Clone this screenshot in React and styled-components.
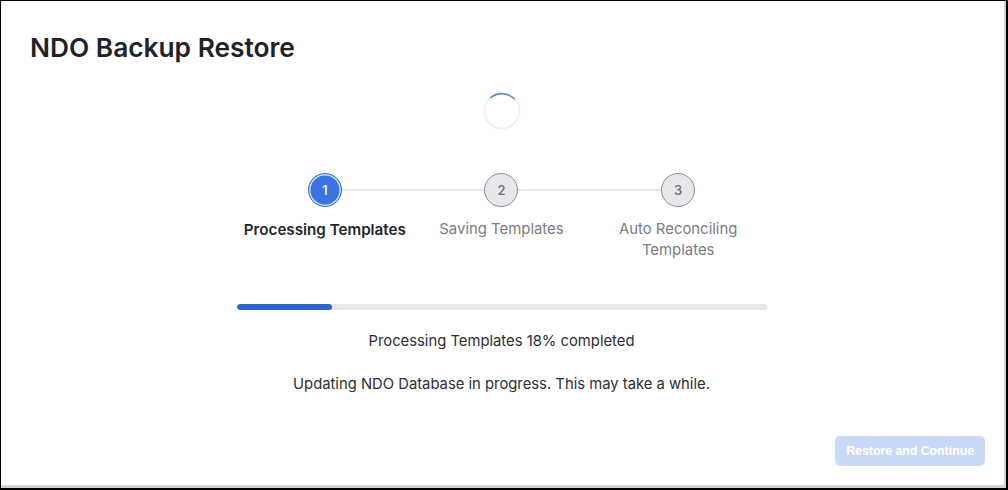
import React from "react";
import styled, { createGlobalStyle } from "styled-components";

const Global = createGlobalStyle`
  html, body { margin: 0; padding: 0; background: #ffffff; }
  body { font-family: Inter, "Noto Sans", "Liberation Sans", sans-serif; }
  * { box-sizing: border-box; }
`;

const Frame = styled.div`
  width: 1008px;
  height: 490px;
  border: 1px solid #000;
  border-right-width: 2px;
  border-bottom-width: 2px;
  background: #fff;
  box-shadow: inset -2px -3px 0 #d4d4d4;
  display: flex;
  flex-direction: column;
  position: relative;
`;

const Title = styled.h1`
  margin: 0;
  padding: 31px 0 0 29px;
  font-size: 26.3px;
  font-weight: 600;
  color: #1f2329;
  line-height: 32px;
  letter-spacing: 0;
`;

const Body = styled.div`
  display: flex;
  flex-direction: column;
  align-items: center;
  padding-top: 28px;
  padding-right: 4px;
`;

const SpinnerWrap = styled.div`
  width: 38px;
  height: 38px;
`;

const Steps = styled.div`
  margin-top: 43px;
  width: 530px;
  display: grid;
  grid-template-columns: repeat(3, 1fr);
  position: relative;
`;

const Connector = styled.div`
  position: absolute;
  top: 16px;
  left: 88px;
  right: 88px;
  height: 2px;
  background: #e8e9ec;
`;

const Step = styled.div`
  display: flex;
  flex-direction: column;
  align-items: center;
  position: relative;
  z-index: 1;
`;

const Dot = styled.div`
  width: 34px;
  height: 34px;
  border-radius: 50%;
  display: flex;
  align-items: center;
  justify-content: center;
  font-size: 13px;
  font-weight: 500;
  ${(p) =>
    p.$active
      ? `background: #3b74e2; color: #fff; border: 1px solid #3b74e2; box-shadow: inset 0 0 0 1.5px #cfe0fb;`
      : `background: #e6e7eb; color: #6b6e75; border: 1.5px solid #8b8e95;`}
`;

const Label = styled.div`
  margin-top: 12px;
  font-size: ${(p) => (p.$active ? 15.2 : 14.9)}px;
  line-height: 21px;
  text-align: center;
  width: 150px;
  font-weight: ${(p) => (p.$active ? 600 : 400)};
  color: ${(p) => (p.$active ? "#24272c" : "#7a7d83")};
  white-space: ${(p) => (p.$nowrap ? "nowrap" : "normal")};
  display: flex;
  justify-content: center;
`;

const Track = styled.div`
  margin-top: 43px;
  width: 530px;
  height: 6px;
  border-radius: 3px;
  background: #e6e7eb;
  overflow: hidden;
`;

const Fill = styled.div`
  height: 100%;
  background: #2f66c9;
  border-radius: 3px;
`;

const Message = styled.p`
  margin: ${(p) => p.$mt}px 0 0;
  font-size: 14.8px;
  line-height: 20px;
  color: #2c2f34;
`;

const Footer = styled.div`
  margin-top: auto;
  display: flex;
  justify-content: flex-end;
  padding: 0 21px 22px 0;
`;

const Button = styled.button`
  height: 30px;
  padding: 0 11px;
  border: none;
  border-radius: 5px;
  background: #cad9f7;
  color: #ffffff;
  font-family: "Liberation Sans", Arial, sans-serif;
  font-weight: 700;
  font-size: 12.3px;
  cursor: not-allowed;
`;

const Spinner = () => (
  <SpinnerWrap>
    <svg width="38" height="38" viewBox="0 0 38 38">
      <circle cx="19" cy="19" r="17.5" fill="none" stroke="#efeff1" strokeWidth="1.5" />
      <path d="M8 5.4 A17.5 17.5 0 0 1 31 6.6" fill="none" stroke="#5a86cc" strokeWidth="1.6" strokeLinecap="round" />
    </svg>
  </SpinnerWrap>
);

const steps = [
  { n: 1, label: "Processing Templates", active: true, nowrap: true },
  { n: 2, label: "Saving Templates", nowrap: true },
  { n: 3, label: "Auto Reconciling Templates" },
];

export default function App() {
  const pct = 18;
  return (
    <>
      <Global />
      <Frame>
        <Title>NDO Backup Restore</Title>
        <Body>
          <Spinner />
          <Steps>
            <Connector />
            {steps.map((s) => (
              <Step key={s.n}>
                <Dot $active={s.active}>{s.n}</Dot>
                <Label $active={s.active} $nowrap={s.nowrap}>
                  {s.label}
                </Label>
              </Step>
            ))}
          </Steps>
          <Track>
            <Fill style={{ width: `${pct}%` }} />
          </Track>
          <Message $mt={21}>Processing Templates {pct}% completed</Message>
          <Message $mt={23}>Updating NDO Database in progress. This may take a while.</Message>
        </Body>
        <Footer>
          <Button disabled>Restore and Continue</Button>
        </Footer>
      </Frame>
    </>
  );
}
